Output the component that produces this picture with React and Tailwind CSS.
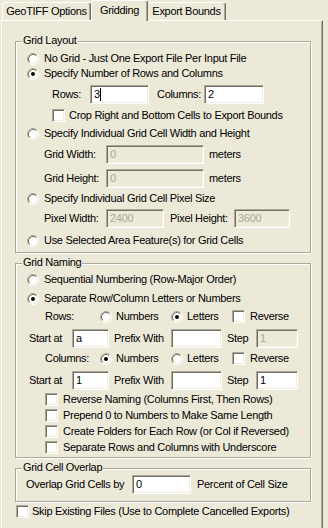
const sunk =
  "border border-t-[#aca899] border-l-[#aca899] border-b-white border-r-white shadow-[inset_1px_1px_0_#716f64,inset_-1px_-1px_0_#f1efe2]";

function Radio({ on }) {
  return (
    <svg width="12" height="12" viewBox="0 0 12 12" className="shrink-0">
      <path d="M2.11 9.89A5.5 5.5 0 0 1 9.89 2.11" fill="none" stroke="#aca899" />
      <path d="M9.89 2.11A5.5 5.5 0 0 1 2.11 9.89" fill="none" stroke="#fff" />
      <circle cx="6" cy="6" r="4" fill="#fff" />
      <path d="M2.82 9.18A4.5 4.5 0 0 1 9.18 2.82" fill="none" stroke="#716f64" />
      <path d="M9.18 2.82A4.5 4.5 0 0 1 2.82 9.18" fill="none" stroke="#f1efe2" />
      {on && <circle cx="6" cy="6" r="2" fill="#000" />}
    </svg>
  );
}

function Check() {
  return <div className={`w-[13px] h-[13px] shrink-0 bg-white ${sunk}`} />;
}

function Field({ className, value, off, caret }) {
  return (
    <div
      className={`h-[19px] shrink-0 flex items-center pl-[3px] ${sunk} ${
        off ? "bg-[#ece9d8] text-[#aca899]" : "bg-white text-black"
      } ${className}`}
    >
      {value}
      {caret && <span className="w-px h-[13px] bg-black" />}
    </div>
  );
}

function Group({ label, className, children }) {
  return (
    <div
      className={`relative ml-[13px] w-[296px] border border-[#aca899] shadow-[inset_1px_1px_0_#fff,1px_1px_0_#fff] ${className}`}
    >
      <span className="absolute -top-[8px] left-[6px] px-[1px] bg-[#ece9d8]">{label}</span>
      {children}
    </div>
  );
}

function RadioRow({ on, text, className }) {
  return (
    <div className={`flex items-center h-[15px] pl-[11px] ${className}`}>
      <Radio on={on} />
      <span className="ml-[5px] whitespace-nowrap">{text}</span>
    </div>
  );
}

function NameRows({ label, numbers, className }) {
  return (
    <div className={`flex items-center h-[15px] pl-[29px] ${className}`}>
      <span className="w-[55px]">{label}</span>
      <Radio on={numbers} />
      <span className="ml-[4px] w-[55px]">Numbers</span>
      <Radio on={!numbers} />
      <span className="ml-[4px] w-[45px]">Letters</span>
      <Check />
      <span className="ml-[5px]">Reverse</span>
    </div>
  );
}

function StartRow({ start, step, stepOff, className }) {
  return (
    <div className={`flex items-center h-[19px] pl-[13px] ${className}`}>
      <span className="w-[43px]">Start at</span>
      <Field className="w-[37px]" value={start} />
      <span className="ml-[5px] w-[57px]">Prefix With</span>
      <Field className="w-[51px]" value="" />
      <span className="ml-[5px] w-[29px]">Step</span>
      <Field className="w-[42px]" value={step} off={stepOff} />
    </div>
  );
}

export default function App() {
  const options = [
    "Reverse Naming (Columns First, Then Rows)",
    "Prepend 0 to Numbers to Make Same Length",
    "Create Folders for Each Row (or Col if Reversed)",
    "Separate Rows and Columns with Underscore",
  ];

  return (
    <div className="w-[328px] h-[528px] overflow-hidden bg-[#ece9d8] text-black text-[11px] leading-[13px] tracking-[-0.3px] font-['Liberation_Sans',Arial,sans-serif]">
      {/* tabs */}
      <div className="flex items-end h-[20px] pl-[2px]">
        <div className="h-[18px] w-[89px] flex items-center justify-center border-l border-t border-white border-r border-r-[#716f64] rounded-t-[3px] shadow-[inset_-1px_0_0_#aca899]">
          GeoTIFF Options
        </div>
        <div className="relative z-10 h-[21px] -mb-px w-[57px] flex items-start pt-[3px] justify-center bg-[#ece9d8] border-l border-t border-white border-r border-r-[#716f64] rounded-t-[3px] shadow-[inset_-1px_0_0_#aca899]">
          Gridding
        </div>
        <div className="h-[18px] w-[78px] flex items-center justify-center border-t border-white border-r border-r-[#716f64] rounded-t-[3px] shadow-[inset_-1px_0_0_#aca899]">
          Export Bounds
        </div>
      </div>

      {/* panel */}
      <div className="ml-px w-[322px] h-[520px] border-l border-t border-white border-r border-r-[#716f64] shadow-[inset_-1px_0_0_#aca899]">
        <Group label="Grid Layout" className="mt-[20px] pt-[9px] pb-[4px]">
          <RadioRow text="No Grid - Just One Export File Per Input File" />
          <RadioRow on text="Specify Number of Rows and Columns" />
          <div className="flex items-center h-[19px] mt-[4px] pl-[36px]">
            <span className="w-[38px]">Rows:</span>
            <Field className="w-[59px]" value="3" caret />
            <span className="ml-[8px] w-[47px]">Columns:</span>
            <Field className="w-[60px]" value="2" />
          </div>
          <div className="flex items-center h-[15px] mt-[4px] pl-[36px]">
            <Check />
            <span className="ml-[4px]">Crop Right and Bottom Cells to Export Bounds</span>
          </div>
          <RadioRow className="mt-[3px]" text="Specify Individual Grid Cell Width and Height" />
          <div className="flex items-center h-[19px] mt-[4px] pl-[28px]">
            <span className="w-[62px]">Grid Width:</span>
            <Field className="w-[98px]" value="0" off />
            <span className="ml-[5px]">meters</span>
          </div>
          <div className="flex items-center h-[19px] mt-[5px] pl-[28px]">
            <span className="w-[62px]">Grid Height:</span>
            <Field className="w-[98px]" value="0" off />
            <span className="ml-[5px]">meters</span>
          </div>
          <RadioRow className="mt-[3px]" text="Specify Individual Grid Cell Pixel Size" />
          <div className="flex items-center h-[19px] mt-[3px] pl-[28px]">
            <span className="w-[62px]">Pixel Width:</span>
            <Field className="w-[58px]" value="2400" off />
            <span className="ml-[6px] w-[64px]">Pixel Height:</span>
            <Field className="w-[56px]" value="3600" off />
          </div>
          <RadioRow className="mt-[5px]" text="Use Selected Area Feature(s) for Grid Cells" />
        </Group>

        <Group label="Grid Naming" className="mt-[10px] pt-[8px] pb-[2px]">
          <RadioRow text="Sequential Numbering (Row-Major Order)" />
          <RadioRow on className="mt-[4px]" text="Separate Row/Column Letters or Numbers" />
          <NameRows label="Rows:" className="mt-[3px]" />
          <StartRow className="mt-[5px]" start="a" step="1" stepOff />
          <NameRows label="Columns:" numbers className="mt-[3px]" />
          <StartRow className="mt-[5px]" start="1" step="1" />
          <div className="mt-px">
            {options.map((t) => (
              <div key={t} className="flex items-center h-[16px] pl-[29px]">
                <Check />
                <span className="ml-[5px] whitespace-nowrap">{t}</span>
              </div>
            ))}
          </div>
        </Group>

        <Group label="Grid Cell Overlap" className="mt-[10px] pt-[6px] pb-[7px]">
          <div className="flex items-center h-[19px] pl-[10px]">
            <span className="w-[106px]">Overlap Grid Cells by</span>
            <Field className="w-[59px]" value="0" />
            <span className="ml-[6px]">Percent of Cell Size</span>
          </div>
        </Group>

        <div className="flex items-center h-[15px] mt-[2px] ml-[14px]">
          <Check />
          <span className="ml-[3px] whitespace-nowrap">Skip Existing Files (Use to Complete Cancelled Exports)</span>
        </div>
      </div>
    </div>
  );
}
